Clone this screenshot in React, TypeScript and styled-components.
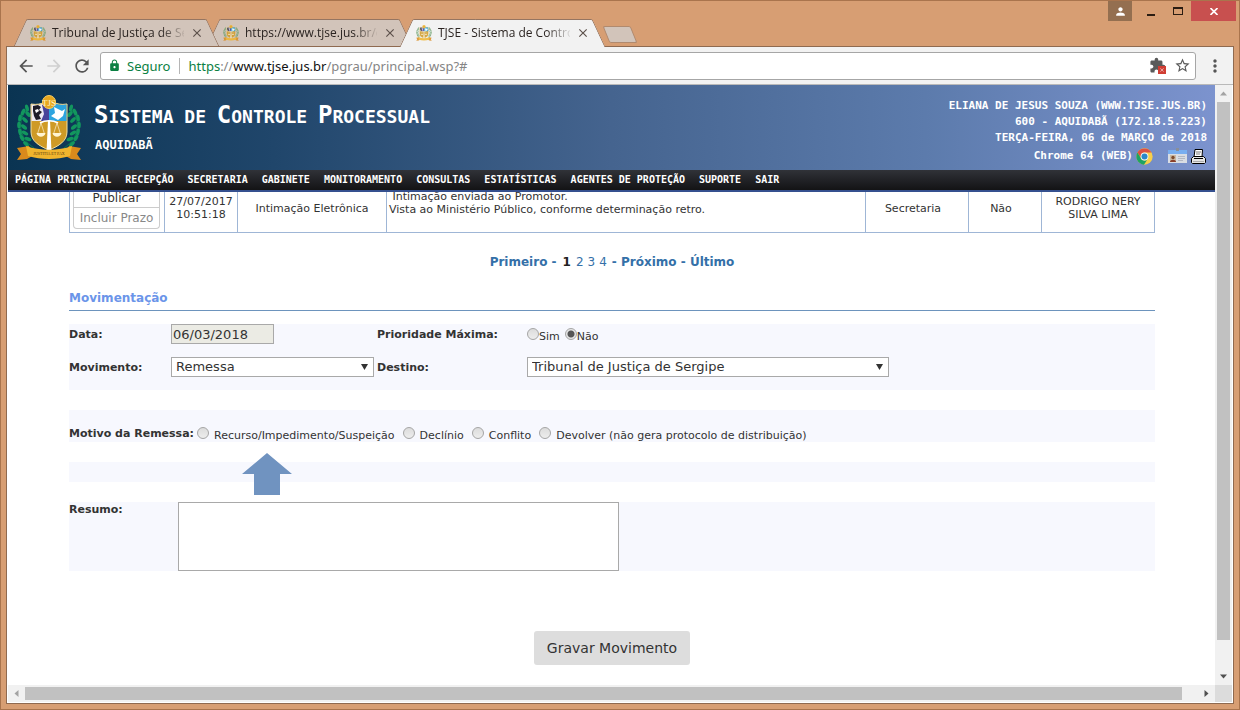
import React from "react";
import styled, { createGlobalStyle } from "styled-components";
import {
  MdArrowBack,
  MdArrowForward,
  MdRefresh,
  MdLock,
  MdExtension,
  MdStarBorder,
  MdMoreVert,
  MdPerson,
  MdClose,
} from "react-icons/md";

const sans = `"DejaVu Sans", Verdana, sans-serif`;
const mono = `"DejaVu Sans Mono", "Liberation Mono", monospace`;
const ui = `"Noto Sans", "Open Sans", sans-serif`;

const GlobalStyle = createGlobalStyle`
  *, *::before, *::after { box-sizing: border-box; }
  body { margin: 0; background: #d79e73; }
  button, input, select, textarea { margin: 0; font: inherit; color: inherit; }
  button { padding: 0; border: 0; background: none; }
  a { color: inherit; text-decoration: none; }
`;

/* ---------- browser window ---------- */

const Window = styled.div`
  display: flex;
  flex-direction: column;
  min-height: 100vh;
  padding: 0 5px 5px;
  border: 1px solid #a9744d;
  background: #d79e73;
  font-family: ${sans};
  font-size: 11px;
  line-height: 13px;
  color: #333;
`;

const TitleBar = styled.div`
  display: flex;
  justify-content: space-between;
  height: 45px;
`;

const Tabs = styled.div`
  display: flex;
  align-items: flex-end;
  padding-left: 8px;
  isolation: isolate;
`;

const TabBox = styled.div<{ $active?: boolean; $order: number }>`
  --fill: ${(p) => (p.$active ? "#f2f2f2" : "#d2c4ba")};
  position: relative;
  z-index: ${(p) => p.$order};
  display: flex;
  align-items: center;
  width: 205px;
  height: ${(p) => (p.$active ? 28 : 27)}px;
  margin: ${(p) => (p.$active ? "0 -12px -1px 0" : "0 -12px 0 0")};
  padding: 0 15px 0 16px;
  gap: 6px;
  font-family: "Open Sans", "Noto Sans", sans-serif;
  font-size: 12px;
  line-height: 16px;
  color: #2b2421;

  &::before,
  &::after {
    content: "";
    position: absolute;
    z-index: -1;
    top: 0;
    bottom: 0;
    background: var(--fill);
    border-top: 1px solid #957561;
  }
  &::before {
    left: 6px;
    right: 50%;
    border-left: 1px solid #957561;
    border-top-left-radius: 2px;
    transform: skewX(-25deg);
  }
  &::after {
    left: 40%;
    right: 6px;
    border-right: 1px solid #957561;
    border-top-right-radius: 2px;
    transform: skewX(25deg);
  }
`;

const TabTitle = styled.span`
  flex: 1;
  overflow: hidden;
  white-space: nowrap;
  mask-image: linear-gradient(to right, #000 82%, rgba(0, 0, 0, 0.1));
`;

const TabClose = styled.button`
  display: flex;
  color: #5c514b;
  font-size: 14px;
`;

const NewTab = styled.button`
  width: 28px;
  height: 17px;
  margin: 0 0 3px 13px;
  border: 1px solid #b18a6e;
  border-radius: 2px;
  background: #d2c4ba;
  transform: skewX(22deg);
`;

const Controls = styled.div`
  display: flex;
  height: 20px;
  margin-right: -2px;
`;

const ControlButton = styled.button<{ $kind: "user" | "plain" | "close" }>`
  display: flex;
  align-items: center;
  justify-content: center;
  width: ${(p) => ({ user: 24, plain: 27, close: 45 })[p.$kind]}px;
  background: ${(p) => ({ user: "#946f50", plain: "transparent", close: "#c8504f" })[p.$kind]};
  color: ${(p) => (p.$kind === "plain" ? "#2b1d12" : "#fff")};
  margin-right: ${(p) => (p.$kind === "user" ? 5 : 0)}px;
`;

const Frame = styled.div`
  flex: 1;
  display: flex;
  flex-direction: column;
  border: 1px solid #8f6a50;
  background: #f2f2f2;
`;

const Toolbar = styled.div`
  display: flex;
  align-items: center;
  height: 38px;
  padding: 0 8px 0 5px;
  border-bottom: 1px solid #b9b9b9;
`;

const ToolButton = styled.button<{ $faded?: boolean }>`
  display: flex;
  justify-content: center;
  width: 28px;
  font-size: 20px;
  color: ${(p) => (p.$faded ? "#d0d0d0" : "#555")};
`;

const AddressBar = styled.div`
  flex: 1;
  display: flex;
  align-items: center;
  gap: 8px;
  height: 28px;
  margin: 0 9px 0 4px;
  padding: 0 4px 0 7px;
  border: 1px solid #a6a6a6;
  border-radius: 3px;
  background: #fff;
  font-family: ${ui};
  font-size: 13px;
  line-height: 18px;
  color: #858585;
`;

const Secure = styled.span`
  display: flex;
  align-items: center;
  gap: 6px;
  padding-right: 9px;
  border-right: 1px solid #b5b5b5;
  line-height: 16px;
  color: #0b8043;
`;

const UrlText = styled.span`
  flex: 1;
  b { font-weight: 400; color: #111; }
  i { font-style: normal; color: #0b8043; }
`;

const BarIcon = styled.button`
  position: relative;
  display: flex;
  color: #5a5a5a;
  font-size: 17px;
`;

const BlockedBadge = styled.span`
  position: absolute;
  right: 0;
  bottom: 0;
  display: flex;
  padding: 1px;
  background: #d03d33;
  color: #fff;
  font-size: 6px;
`;

const MenuButton = styled.button`
  display: flex;
  font-size: 20px;
  color: #555;
`;

/* ---------- viewport with scroll bars ---------- */

const Viewport = styled.div`
  flex: 1;
  display: grid;
  grid-template-columns: minmax(0, 1fr) 17px;
  grid-template-rows: minmax(0, 1fr) 17px;
  padding: 0 1px 1px;
  background: #fff;
`;

const Track = styled.div<{ $vertical?: boolean }>`
  display: flex;
  flex-direction: ${(p) => (p.$vertical ? "column" : "row")};
  align-items: center;
  background: #f1f1f1;
`;

const ArrowCell = styled.div`
  display: flex;
  align-items: center;
  justify-content: center;
  width: 17px;
  height: 17px;
`;

const Thumb = styled.div<{ $vertical?: boolean }>`
  background: #c1c1c1;
  ${(p) =>
    p.$vertical ? "width: 13px; flex: 0 1 538px;" : "height: 13px; flex: 0 1 1157px;"}
`;

const Spacer = styled.div`
  flex: 1;
`;

const Corner = styled.div`
  background: #dcdcdc;
`;

/* ---------- page ---------- */

const Header = styled.header`
  display: flex;
  justify-content: space-between;
  height: 85px;
  padding: 10px 8px 0;
  background: linear-gradient(to right, #0a3452 0%, #20466b 22%, #45648f 50%, #5c7bac 76%, #7c93ce 100%);
  font-family: ${mono};
  font-weight: 700;
  color: #fff;
`;

const Brand = styled.div`
  display: flex;
  gap: 12px;
`;

const Title = styled.h1`
  margin: 5px 0;
  font-size: 18px;
  line-height: 30px;
  text-transform: uppercase;
`;

const Initial = styled.span`
  font-size: 24px;
`;

const District = styled.p`
  margin: 0;
  padding-left: 1px;
  font-size: 12px;
  line-height: 16px;
`;

const Session = styled.div`
  padding-top: 3px;
  font-size: 11px;
  line-height: 16px;
  text-align: right;
`;

const SessionTools = styled.div`
  display: flex;
  align-items: center;
  justify-content: flex-end;
  height: 20px;
  gap: 3px;
  margin-right: 1px;
`;

const ToolPair = styled.span`
  display: flex;
  align-items: center;
  gap: 4px;
  margin-left: 12px;
`;

const Nav = styled.nav`
  display: flex;
  gap: 14px;
  height: 22px;
  padding: 0 7px;
  border-bottom: 2px solid #35508f;
  background: linear-gradient(#303238, #131315);
  font-family: ${mono};
  font-size: 10px;
  font-weight: 700;
  line-height: 20px;
  color: #fff;
  white-space: nowrap;
`;

const Content = styled.main`
  padding: 0 60px 20px 61px;
`;

const HistoryClip = styled.div`
  display: flex;
  align-items: flex-end;
  height: 41px;
  overflow: hidden;
`;

const History = styled.table`
  flex: 1;
  table-layout: fixed;
  border-collapse: collapse;
  width: 100%;
  text-align: center;
`;

const Cell = styled.td<{ $kind?: "text" | "short" | "tools" }>`
  height: 49px;
  padding: ${(p) =>
    p.$kind ? { text: "6px 2px", short: "0 12px 0 4px", tools: "0 4px 0 3px" }[p.$kind] : "0 3px"};
  border: 1px solid #9fb6d6;
  vertical-align: ${(p) => (p.$kind === "text" ? "top" : "middle")};
  text-align: ${(p) => (p.$kind === "text" ? "left" : "center")};
`;

const RowButton = styled.button<{ $last?: boolean }>`
  display: block;
  width: 100%;
  height: 21px;
  border: 1px solid #ccc;
  border-top-width: ${(p) => (p.$last ? 0 : 1)}px;
  border-radius: ${(p) => (p.$last ? "0 0 4px 4px" : "0")};
  background: #fff;
  font-size: 12px;
  line-height: 18px;
  color: ${(p) => (p.$last ? "#888" : "#333")};
`;

const Pager = styled.nav`
  display: flex;
  justify-content: center;
  gap: 4px;
  padding: 21px 0 20px;
  font-size: 12px;
  line-height: 16px;
  color: #3470a8;

  b { padding: 0 1px; }
`;

const CurrentPage = styled.b`
  color: #222;
`;

const SectionTitle = styled.h2`
  margin: 0 0 13px;
  padding-bottom: 4px;
  border-bottom: 1px solid #6d94bd;
  font-size: 12px;
  line-height: 16px;
  color: #6b95e9;
`;

const Panel = styled.div`
  position: relative;
  min-height: 20px;
  margin-bottom: 20px;
  background: #f7f8fe;
`;

const FieldGrid = styled(Panel)`
  display: grid;
  grid-template-columns: 102px 206px 150px 1fr;
  grid-auto-rows: 20px;
  align-items: center;
  row-gap: 13px;
  padding-bottom: 13px;
`;

const Label = styled.label`
  font-weight: 700;
  white-space: nowrap;
`;

const DateInput = styled.input`
  width: 103px;
  height: 20px;
  padding: 0 1px;
  border: 1px solid #a9a9a9;
  background: #ebebe4;
  font-size: 13px;
`;

const SelectWrap = styled.span<{ $width: number }>`
  position: relative;
  display: block;
  width: ${(p) => p.$width}px;
  height: 20px;

  svg {
    position: absolute;
    top: 7px;
    right: 6px;
    pointer-events: none;
  }
`;

const Select = styled.select`
  appearance: none;
  display: block;
  width: 100%;
  height: 20px;
  padding: 0 20px 0 4px;
  border: 1px solid #a9a9a9;
  border-radius: 0;
  background: #fff;
  font-size: 13px;
  line-height: 18px;
`;

const Options = styled.div`
  display: flex;
  gap: 5px;
`;

const Option = styled.label<{ $wide?: boolean }>`
  display: flex;
  align-items: center;
  gap: ${(p) => (p.$wide ? 5 : 0)}px;
  white-space: nowrap;

  span { padding-top: 5px; }
`;

const Radio = styled.input`
  appearance: none;
  flex: none;
  width: 12px;
  height: 12px;
  margin: 0;
  border: 1px solid #a5a5a5;
  border-radius: 50%;
  background: linear-gradient(#dcdcdc, #ededed);

  &:checked {
    background: radial-gradient(circle, #555 0 3px, #e6e6e6 4px);
  }
`;

const ReasonRow = styled(Panel)`
  display: flex;
  align-items: center;
  gap: 3px;
  height: 32px;
  padding-top: 14px;
`;

const ReasonOptions = styled.div`
  display: flex;
  gap: 8px;
`;

const Pointer = styled.svg`
  position: absolute;
  top: -9px;
  left: 173px;
`;

const SummaryRow = styled(Panel)`
  display: flex;

  label { width: 109px; padding-top: 1px; }
`;

const Summary = styled.textarea`
  width: 441px;
  height: 69px;
  border: 1px solid #a9a9a9;
  background: #fff;
  resize: none;
`;

const Actions = styled.div`
  display: flex;
  justify-content: center;
  padding-top: 40px;
`;

const SaveButton = styled.button`
  height: 34px;
  padding: 0 13px;
  border-radius: 3px;
  background: #ddd;
  font-size: 14px;
  line-height: 20px;
`;

/* ---------- drawings ---------- */

const leaves = [
  [11, 13, -15], [7, 17, 25], [12, 19, -40], [4, 23, 10], [9, 25, -45], [3, 30, 0],
  [8, 32, -50], [4, 37, -10], [9, 38, -60], [6, 43, -30], [12, 44, -70], [10, 49, -45],
];

function Crest({ size, lettered }: { size: number; lettered?: boolean }) {
  const half = leaves.map(([x, y, r], i) => (
    <ellipse key={i} cx={x} cy={y} rx="1.800" ry="3.600" transform={`rotate(${r} ${x} ${y})`} />
  ));
  return (
    <svg width={size} height={size} viewBox="0 0 66 66" aria-hidden="true" opacity={lettered ? 1 : 0.85}>
      <g fill={lettered ? "#12965e" : "#6fa06a"}>
        <path d="M12 12C1 26 2 42 18 53" fill="none" stroke="#0b7d4c" strokeWidth="1" />
        {half}
        <g transform="translate(66 0) scale(-1 1)">
          <path d="M12 12C1 26 2 42 18 53" fill="none" stroke="#0b7d4c" strokeWidth="1" />
          {half}
        </g>
      </g>
      <path d="M15 9c6 1 10 0 14-2h8c4 2 8 3 14 2v28c0 9-8 14-18 18-10-4-18-9-18-18z" fill="#cf9a26" stroke="#f3dfa0" />
      <path d="M15.500 9.500c6 1 10 0 14-2H33V26H15.500z" fill="#eeeaf2" />
      <path d="M17 11l5-1 3 2-2 3 3 2-3 3 2 4-5 1-2-4-1-5z" fill="#1d1c28" />
      <path d="M19 15l3-1 1 2-3 2z" fill="#fff" />
      <path d="M26 10l7-2v18h-8l3-7z" fill="#49439a" />
      <path d="M33 7.500h4c4 2 8 3 13.500 2V26H33z" fill="#2da4df" />
      <path d="M38 12l8 4 3-2-2 7-5 4-7-4 4-3z" fill="#fff" />
      <path d="M32 25h2l1.500 32h-5z" fill="#fff" />
      <path d="M24 28c5-3 13-3 18 0" fill="none" stroke="#fff" strokeWidth="1.500" />
      <path d="M25 28l-3.500 11M25 28l3.500 11M41 28l-3.500 11M41 28l3.500 11" stroke="#fbeecb" strokeWidth=".7" />
      <path d="M20.500 38h9c-1 5-8 5-9 0zM36.500 38h9c-1 5-8 5-9 0z" fill="#fff4d2" />
      <circle cx="33" cy="7" r="6.500" fill="#e7a71f" stroke="#f9cf62" />
      <path d="M1 53l12-2 5 9-7 4-10 1 4-6zM65 53l-12-2-5 9 7 4 10 1-4-6z" fill="#d98a1c" />
      <path d="M10 51c14 5 32 5 46 0l-2 10c-13 4-29 4-42 0z" fill="#f0b52e" />
      {lettered && (
        <g fontFamily="Liberation Serif, serif" fontWeight="400" textAnchor="middle">
          <text x="33" y="11" fontSize="9" fill="#fff3c8">TJS</text>
          <text x="33" y="60" fontSize="4" fill="#5b3a0c">JUSTITIA ET PAX</text>
        </g>
      )}
    </svg>
  );
}

const Triangle = ({ d, color }: { d: string; color: string }) => (
  <svg width="9" height="9" viewBox="0 0 9 9" aria-hidden="true">
    <path d={d} fill={color} />
  </svg>
);

const SelectArrow = () => (
  <svg width="7" height="6" viewBox="0 0 7 6" aria-hidden="true">
    <path d="M0 0h7L3.500 6z" fill="#333" />
  </svg>
);

const ChromeLogo = () => (
  <svg width="17" height="17" viewBox="0 0 48 48" role="img" aria-label="Chrome">
    <circle cx="24" cy="24" r="23" fill="#f7cf4a" />
    <path d="M4 12.500A23 23 0 0 1 44 13H24a11 11 0 0 0-10 16z" fill="#dd5144" />
    <path d="M4 12.500A23 23 0 0 0 22.500 47l11-17A11 11 0 0 1 14 29z" fill="#1da362" />
    <circle cx="24" cy="24" r="11" fill="#f4f4f4" />
    <circle cx="24" cy="24" r="8.500" fill="#2b87c9" />
  </svg>
);

const BadgeIcon = () => (
  <svg width="19" height="16" viewBox="0 0 19 16" aria-hidden="true">
    <path d="M0 2h19v13H0z" fill="#d9dde3" />
    <path d="M0 2h19v4H0z" fill="#78aef0" />
    <path d="M8 0h3v3H8z" fill="#8a8f98" />
    <path d="M2 7h6v7H2z" fill="#c9b9a3" />
    <circle cx="5" cy="9.500" r="1.700" fill="#7d4b2d" />
    <path d="M2 14c0-3 6-3 6 0z" fill="#8a3f2b" />
    <path d="M10 8.500h7M10 10.500h7M10 12.500h5" stroke="#b3b8c2" />
  </svg>
);

const PrinterIcon = () => (
  <svg width="15" height="15" viewBox="0 0 15 15" aria-hidden="true">
    <path d="M4 .5h7.500L11 8H3z" fill="#fff" stroke="#000" />
    <path d="M5 3h5M5 5h4" stroke="#777" />
    <path d="M2.500 7.500h10l2 2v4l-1 1h-12l-1-1v-4z" fill="#e6e6e6" stroke="#000" />
    <path d="M3 9.500h9" stroke="#000" />
    <path d="M2 12.500h11" stroke="#aaa" />
  </svg>
);

/* ---------- data ---------- */

const tabs = ["Tribunal de Justiça de Se", "https://www.tjse.jus.br/cc", "TJSE - Sistema de Contro"];

const menu = [
  "PÁGINA PRINCIPAL", "RECEPÇÃO", "SECRETARIA", "GABINETE", "MONITORAMENTO",
  "CONSULTAS", "ESTATÍSTICAS", "AGENTES DE PROTEÇÃO", "SUPORTE", "SAIR",
];

const reasons = [
  "Recurso/Impedimento/Suspeição",
  "Declínio",
  "Conflito",
  "Devolver (não gera protocolo de distribuição)",
];

const columns = [95, 73, 149, undefined, 103, 73, 113];

export default function App() {
  return (
    <Window>
      <GlobalStyle />
      <TitleBar>
        <Tabs>
          {tabs.map((title, i) => (
            <TabBox key={title} $active={i === 2} $order={i === 2 ? 4 : 3 - i}>
              <Crest size={16} />
              <TabTitle>{title}</TabTitle>
              <TabClose aria-label="Fechar guia"><MdClose /></TabClose>
            </TabBox>
          ))}
          <NewTab aria-label="Nova guia" />
        </Tabs>
        <Controls>
          <ControlButton $kind="user" aria-label="Usuário"><MdPerson size={13} /></ControlButton>
          <ControlButton $kind="plain" aria-label="Minimizar">
            <svg width="10" height="10"><path d="M1 8h8v2H1z" fill="currentColor" /></svg>
          </ControlButton>
          <ControlButton $kind="plain" aria-label="Maximizar">
            <svg width="10" height="8"><path d="M0 0h10v8H0zM1 2v5h8V2z" fill="currentColor" fillRule="evenodd" /></svg>
          </ControlButton>
          <ControlButton $kind="close" aria-label="Fechar">
            <svg width="8" height="7"><path d="M.5 0l7 7M7.500 0l-7 7" stroke="#fff" strokeWidth="1.600" /></svg>
          </ControlButton>
        </Controls>
      </TitleBar>

      <Frame>
        <Toolbar>
          <ToolButton aria-label="Voltar"><MdArrowBack /></ToolButton>
          <ToolButton $faded aria-label="Avançar"><MdArrowForward /></ToolButton>
          <ToolButton aria-label="Recarregar"><MdRefresh /></ToolButton>
          <AddressBar>
            <Secure><MdLock size={13} />Seguro</Secure>
            <UrlText><i>https</i>://<b>www.tjse.jus.br</b>/pgrau/principal.wsp?#</UrlText>
            <BarIcon aria-label="Extensão bloqueada">
              <MdExtension />
              <BlockedBadge><MdClose /></BlockedBadge>
            </BarIcon>
            <BarIcon aria-label="Favoritar"><MdStarBorder /></BarIcon>
          </AddressBar>
          <MenuButton aria-label="Menu"><MdMoreVert /></MenuButton>
        </Toolbar>

        <Viewport>
          <div>
            <Header>
              <Brand>
                <Crest size={66} lettered />
                <div>
                  <Title>
                    <Initial>S</Initial>istema de <Initial>C</Initial>ontrole <Initial>P</Initial>rocessual
                  </Title>
                  <District>AQUIDABÃ</District>
                </div>
              </Brand>
              <Session>
                <div>ELIANA DE JESUS SOUZA (WWW.TJSE.JUS.BR)</div>
                <div>600 - AQUIDABÃ (172.18.5.223)</div>
                <div>TERÇA-FEIRA, 06 de MARÇO de 2018</div>
                <SessionTools>
                  Chrome 64 (WEB)
                  <ChromeLogo />
                  <ToolPair><BadgeIcon /><PrinterIcon /></ToolPair>
                </SessionTools>
              </Session>
            </Header>
            <Nav>
              {menu.map((item) => <a key={item} href="#">{item}</a>)}
            </Nav>

            <Content>
              <HistoryClip>
                <History>
                  <colgroup>
                    {columns.map((width, i) => <col key={i} width={width} />)}
                  </colgroup>
                  <tbody>
                    <tr>
                      <Cell $kind="tools">
                        <RowButton>Publicar</RowButton>
                        <RowButton $last>Incluir Prazo</RowButton>
                      </Cell>
                      <Cell>27/07/2017 10:51:18</Cell>
                      <Cell>Intimação Eletrônica</Cell>
                      <Cell $kind="text">
                        &nbsp;Intimação enviada ao Promotor.<br />
                        Vista ao Ministério Público, conforme determinação retro.
                      </Cell>
                      <Cell $kind="short">Secretaria</Cell>
                      <Cell $kind="short">Não</Cell>
                      <Cell>RODRIGO NERY SILVA LIMA</Cell>
                    </tr>
                  </tbody>
                </History>
              </HistoryClip>

              <Pager>
                <b><a href="#">Primeiro</a> -</b>
                <CurrentPage>1</CurrentPage>
                <a href="#">2</a>
                <a href="#">3</a>
                <a href="#">4</a>
                <b>- <a href="#">Próximo</a> - <a href="#">Último</a></b>
              </Pager>

              <SectionTitle>Movimentação</SectionTitle>
              <FieldGrid>
                <Label htmlFor="data">Data:</Label>
                <DateInput id="data" defaultValue="06/03/2018" readOnly />
                <Label as="span" id="prioridade">Prioridade Máxima:</Label>
                <Options role="radiogroup" aria-labelledby="prioridade">
                  <Option><Radio type="radio" name="prioridade" /><span>Sim</span></Option>
                  <Option><Radio type="radio" name="prioridade" defaultChecked /><span>Não</span></Option>
                </Options>
                <Label htmlFor="movimento">Movimento:</Label>
                <SelectWrap $width={203}>
                  <Select id="movimento"><option>Remessa</option></Select>
                  <SelectArrow />
                </SelectWrap>
                <Label htmlFor="destino">Destino:</Label>
                <SelectWrap $width={362}>
                  <Select id="destino"><option>Tribunal de Justiça de Sergipe</option></Select>
                  <SelectArrow />
                </SelectWrap>
              </FieldGrid>

              <ReasonRow>
                <Label as="span" id="motivo">Motivo da Remessa:</Label>
                <ReasonOptions role="radiogroup" aria-labelledby="motivo">
                  {reasons.map((reason) => (
                    <Option key={reason} $wide>
                      <Radio type="radio" name="motivo" />
                      <span>{reason}</span>
                    </Option>
                  ))}
                </ReasonOptions>
              </ReasonRow>

              <Panel>
                <Pointer width="50" height="42" viewBox="0 0 50 42" aria-hidden="true">
                  <path d="M25 0l25 21H38v21H12V21H0z" fill="#7093c0" />
                </Pointer>
              </Panel>

              <SummaryRow>
                <Label htmlFor="resumo">Resumo:</Label>
                <Summary id="resumo" />
              </SummaryRow>

              <Actions>
                <SaveButton>Gravar Movimento</SaveButton>
              </Actions>
            </Content>
          </div>

          <Track $vertical>
            <ArrowCell><Triangle d="M1 6.500h7L4.500 2.500z" color="#a3a3a3" /></ArrowCell>
            <Thumb $vertical />
            <Spacer />
            <ArrowCell><Triangle d="M1 2.500h7L4.500 6.500z" color="#505050" /></ArrowCell>
          </Track>
          <Track>
            <ArrowCell><Triangle d="M6.500 1v7L2.500 4.500z" color="#a3a3a3" /></ArrowCell>
            <Thumb />
            <Spacer />
            <ArrowCell><Triangle d="M2.500 1v7L6.500 4.500z" color="#505050" /></ArrowCell>
          </Track>
          <Corner />
        </Viewport>
      </Frame>
    </Window>
  );
}
